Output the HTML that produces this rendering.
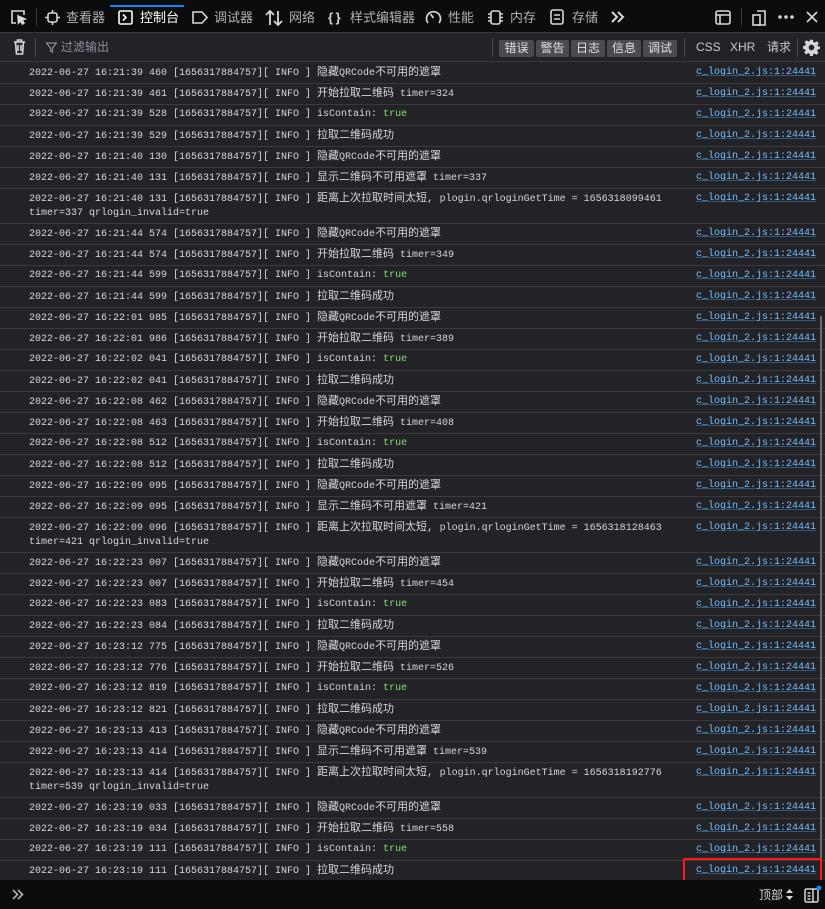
<!DOCTYPE html>
<html><head><meta charset="utf-8"><style>
*{box-sizing:border-box;margin:0;padding:0}
body{width:825px;height:909px;background:#232327;overflow:hidden;font-family:"Liberation Sans","Noto Sans CJK SC",sans-serif;color:#d7d7db;position:relative}
.tb{position:absolute;left:0;top:0;width:825px;height:33px;background:#0c0c0d;border-bottom:1px solid #38383d}
.tb .it{position:absolute;top:0;height:33px;line-height:35px;font-size:13px;color:#b1b1b3}
.tb .act{color:#fff}
.bar{position:absolute;left:110px;top:5px;width:74px;height:2px;background:#0a84ff}
.ic{position:absolute}
.fb{position:absolute;left:0;top:33px;width:825px;height:29px;background:#232327;border-bottom:1px solid #38383d}
.btn{position:absolute;top:7px;height:17px;line-height:17px;font-size:12px;color:#e0e0e2;background:#4a4a4f;text-align:center;border-radius:2px}
.fl{position:absolute;top:0;line-height:29px;font-size:12px;color:#c8c8cc}
.sep{position:absolute;width:1px;background:#4a4a4f}
.log{position:absolute;left:0;top:63px;width:825px}
.r{position:relative;border-bottom:1px solid #3a3a3f;padding:3px 0 3px 29px;font:10px/14px "Liberation Mono","Noto Sans CJK SC",monospace;color:#d7d7db;white-space:pre;height:21px}
.r.d{height:35px}
.r .l{position:absolute;right:9px;top:3px;color:#75bfff;text-decoration:underline;text-decoration-color:#2e5a80}
.c{font-size:11px;line-height:14px}
.t{color:#86de74}
.bb{position:absolute;left:0;top:880px;width:825px;height:29px;background:#0c0c0d}
.box{position:absolute;left:683px;top:858px;width:139px;height:24px;border:2px solid #ff1a1a;border-radius:2px}
.sb{position:absolute;left:820px;top:316px;width:2px;height:564px;background:#6b6b70}
</style></head><body>
<div class="tb">
<div class="bar"></div>
<svg class="ic" style="left:10px;top:9px" width="17" height="16" viewBox="0 0 17 16" fill="none" stroke="#d7d7db" stroke-width="1.6"><path d="M6 14H2V2h12v4"/><path d="M8 7l7 3-3 1 2 3-1.5 1-2-3-2 2z" fill="#d7d7db"/></svg>
<div class="sep" style="left:36px;top:8px;height:18px;background:#38383d"></div>
<svg class="ic" style="left:45px;top:10px" width="15" height="15" viewBox="0 0 15 15" fill="none" stroke="#d7d7db" stroke-width="1.6"><rect x="3" y="3" width="9" height="9" rx="2"/><path d="M7.5 0v3M7.5 12v3M0 7.5h3M12 7.5h3"/></svg>
<div class="it" style="left:66px">查看器</div>
<svg class="ic" style="left:118px;top:10px" width="15" height="15" viewBox="0 0 15 15" fill="none" stroke="#fff" stroke-width="1.6"><rect x="1" y="1" width="13" height="13" rx="1.5"/><path d="M5 4.5l3 3-3 3"/></svg>
<div class="it act" style="left:140px">控制台</div>
<svg class="ic" style="left:192px;top:10px" width="16" height="15" viewBox="0 0 16 15" fill="none" stroke="#d7d7db" stroke-width="1.6"><path d="M1 2h9l5 5.5-5 5.5H1z"/></svg>
<div class="it" style="left:214px">调试器</div>
<svg class="ic" style="left:265px;top:10px" width="18" height="16" viewBox="0 0 18 16" fill="none" stroke="#d7d7db" stroke-width="1.8"><path d="M5 15V1M1 5l4-4 4 4M13 1v14M9 11l4 4 4-4"/></svg>
<div class="it" style="left:289px">网络</div>
<div class="it" style="left:328px;font-weight:bold;color:#d7d7db">{&thinsp;}</div>
<div class="it" style="left:350px">样式编辑器</div>
<svg class="ic" style="left:425px;top:9px" width="17" height="16" viewBox="0 0 17 16" fill="none" stroke="#d7d7db" stroke-width="1.7"><path d="M3 14A7 7 0 1 1 14 14"/><path d="M8.5 9l-3-4"/></svg>
<div class="it" style="left:448px">性能</div>
<svg class="ic" style="left:487px;top:10px" width="17" height="15" viewBox="0 0 17 15" fill="none" stroke="#d7d7db" stroke-width="1.6"><rect x="4" y="1" width="9" height="13" rx="2"/><path d="M1 4h3M1 7.5h3M1 11h3M13 4h3M13 7.5h3M13 11h3"/></svg>
<div class="it" style="left:510px">内存</div>
<svg class="ic" style="left:550px;top:9px" width="14" height="16" viewBox="0 0 14 16" fill="none" stroke="#d7d7db" stroke-width="1.6"><rect x="1" y="1" width="12" height="14" rx="2"/><path d="M4 6h6M4 10h6"/></svg>
<div class="it" style="left:572px">存储</div>
<svg class="ic" style="left:611px;top:11px" width="14" height="12" viewBox="0 0 14 12" fill="none" stroke="#d7d7db" stroke-width="2"><path d="M1 1l5 5-5 5M7 1l5 5-5 5"/></svg>
<svg class="ic" style="left:715px;top:10px" width="16" height="15" viewBox="0 0 16 15" fill="none" stroke="#d7d7db" stroke-width="1.6"><rect x="1" y="1" width="14" height="13" rx="2"/><path d="M1 5h14M5 5v9"/></svg>
<div class="sep" style="left:741px;top:8px;height:18px;background:#38383d"></div>
<svg class="ic" style="left:752px;top:9px" width="15" height="17" viewBox="0 0 15 17" fill="none" stroke="#d7d7db" stroke-width="1.6"><path d="M5 2h8v14H5"/><rect x="1" y="6" width="7" height="10"/></svg>
<svg class="ic" style="left:778px;top:15px" width="16" height="4" viewBox="0 0 16 4" fill="#d7d7db"><circle cx="2" cy="2" r="1.8"/><circle cx="8" cy="2" r="1.8"/><circle cx="14" cy="2" r="1.8"/></svg>
<svg class="ic" style="left:806px;top:11px" width="12" height="12" viewBox="0 0 12 12" stroke="#d7d7db" stroke-width="1.6"><path d="M1 1l10 10M11 1L1 11"/></svg>
</div>
<div class="fb">
<svg class="ic" style="left:13px;top:6px" width="13" height="16" viewBox="0 0 13 16" fill="none" stroke="#d7d7db" stroke-width="1.6"><path d="M1 3h11M4.5 3V1h4v2M2.5 3l1 12h6l1-12M5 6v6M8 6v6"/></svg>
<div class="sep" style="left:35px;top:5px;height:19px"></div>
<svg class="ic" style="left:46px;top:9px" width="11" height="11" viewBox="0 0 11 11" fill="none" stroke="#8f8f9d" stroke-width="1.2"><path d="M0.5 1h10L6.5 6v4l-2-1V6z"/></svg>
<div class="fl" style="left:61px;color:#8f8f9d">过滤输出</div>
<div class="sep" style="left:492px;top:5px;height:19px"></div>
<div class="btn" style="left:499px;width:35px">错误</div>
<div class="btn" style="left:536px;width:33px">警告</div>
<div class="btn" style="left:571px;width:34px">日志</div>
<div class="btn" style="left:607px;width:34px">信息</div>
<div class="btn" style="left:643px;width:34px">调试</div>
<div class="sep" style="left:684px;top:5px;height:19px"></div>
<div class="fl" style="left:696px">CSS</div>
<div class="fl" style="left:730px">XHR</div>
<div class="fl" style="left:767px">请求</div>
<div class="sep" style="left:797px;top:5px;height:19px"></div>
<svg class="ic" style="left:803px;top:6px" width="17" height="17" viewBox="0 0 24 24" fill="#d7d7db"><path d="M10 1h4l.6 3.2 2.2.9 2.7-1.9 2.8 2.8-1.9 2.7.9 2.2L24 10v4l-3.2.6-.9 2.2 1.9 2.7-2.8 2.8-2.7-1.9-2.2.9L14 24h-4l-.6-3.2-2.2-.9-2.7 1.9-2.8-2.8 1.9-2.7-.9-2.2L0 14v-4l3.2-.6.9-2.2L2.2 4.5 5 1.7l2.7 1.9 2.2-.9zM12 8a4 4 0 1 0 0 8 4 4 0 0 0 0-8z"/></svg>
</div>
<div class="log">
<div class="r">2022-06-27 16:21:39 460 [1656317884757][ INFO ] <span class="c">隐藏</span>QRCode<span class="c">不可用的遮罩</span><span class="l">c_login_2.js:1:24441</span></div>
<div class="r">2022-06-27 16:21:39 461 [1656317884757][ INFO ] <span class="c">开始拉取二维码</span> timer=324<span class="l">c_login_2.js:1:24441</span></div>
<div class="r">2022-06-27 16:21:39 528 [1656317884757][ INFO ] isContain: <span class="t">true</span><span class="l">c_login_2.js:1:24441</span></div>
<div class="r">2022-06-27 16:21:39 529 [1656317884757][ INFO ] <span class="c">拉取二维码成功</span><span class="l">c_login_2.js:1:24441</span></div>
<div class="r">2022-06-27 16:21:40 130 [1656317884757][ INFO ] <span class="c">隐藏</span>QRCode<span class="c">不可用的遮罩</span><span class="l">c_login_2.js:1:24441</span></div>
<div class="r">2022-06-27 16:21:40 131 [1656317884757][ INFO ] <span class="c">显示二维码不可用遮罩</span> timer=337<span class="l">c_login_2.js:1:24441</span></div>
<div class="r d">2022-06-27 16:21:40 131 [1656317884757][ INFO ] <span class="c">距离上次拉取时间太短,</span> plogin.qrloginGetTime = 1656318099461
timer=337 qrlogin_invalid=true<span class="l">c_login_2.js:1:24441</span></div>
<div class="r">2022-06-27 16:21:44 574 [1656317884757][ INFO ] <span class="c">隐藏</span>QRCode<span class="c">不可用的遮罩</span><span class="l">c_login_2.js:1:24441</span></div>
<div class="r">2022-06-27 16:21:44 574 [1656317884757][ INFO ] <span class="c">开始拉取二维码</span> timer=349<span class="l">c_login_2.js:1:24441</span></div>
<div class="r">2022-06-27 16:21:44 599 [1656317884757][ INFO ] isContain: <span class="t">true</span><span class="l">c_login_2.js:1:24441</span></div>
<div class="r">2022-06-27 16:21:44 599 [1656317884757][ INFO ] <span class="c">拉取二维码成功</span><span class="l">c_login_2.js:1:24441</span></div>
<div class="r">2022-06-27 16:22:01 985 [1656317884757][ INFO ] <span class="c">隐藏</span>QRCode<span class="c">不可用的遮罩</span><span class="l">c_login_2.js:1:24441</span></div>
<div class="r">2022-06-27 16:22:01 986 [1656317884757][ INFO ] <span class="c">开始拉取二维码</span> timer=389<span class="l">c_login_2.js:1:24441</span></div>
<div class="r">2022-06-27 16:22:02 041 [1656317884757][ INFO ] isContain: <span class="t">true</span><span class="l">c_login_2.js:1:24441</span></div>
<div class="r">2022-06-27 16:22:02 041 [1656317884757][ INFO ] <span class="c">拉取二维码成功</span><span class="l">c_login_2.js:1:24441</span></div>
<div class="r">2022-06-27 16:22:08 462 [1656317884757][ INFO ] <span class="c">隐藏</span>QRCode<span class="c">不可用的遮罩</span><span class="l">c_login_2.js:1:24441</span></div>
<div class="r">2022-06-27 16:22:08 463 [1656317884757][ INFO ] <span class="c">开始拉取二维码</span> timer=408<span class="l">c_login_2.js:1:24441</span></div>
<div class="r">2022-06-27 16:22:08 512 [1656317884757][ INFO ] isContain: <span class="t">true</span><span class="l">c_login_2.js:1:24441</span></div>
<div class="r">2022-06-27 16:22:08 512 [1656317884757][ INFO ] <span class="c">拉取二维码成功</span><span class="l">c_login_2.js:1:24441</span></div>
<div class="r">2022-06-27 16:22:09 095 [1656317884757][ INFO ] <span class="c">隐藏</span>QRCode<span class="c">不可用的遮罩</span><span class="l">c_login_2.js:1:24441</span></div>
<div class="r">2022-06-27 16:22:09 095 [1656317884757][ INFO ] <span class="c">显示二维码不可用遮罩</span> timer=421<span class="l">c_login_2.js:1:24441</span></div>
<div class="r d">2022-06-27 16:22:09 096 [1656317884757][ INFO ] <span class="c">距离上次拉取时间太短,</span> plogin.qrloginGetTime = 1656318128463
timer=421 qrlogin_invalid=true<span class="l">c_login_2.js:1:24441</span></div>
<div class="r">2022-06-27 16:22:23 007 [1656317884757][ INFO ] <span class="c">隐藏</span>QRCode<span class="c">不可用的遮罩</span><span class="l">c_login_2.js:1:24441</span></div>
<div class="r">2022-06-27 16:22:23 007 [1656317884757][ INFO ] <span class="c">开始拉取二维码</span> timer=454<span class="l">c_login_2.js:1:24441</span></div>
<div class="r">2022-06-27 16:22:23 083 [1656317884757][ INFO ] isContain: <span class="t">true</span><span class="l">c_login_2.js:1:24441</span></div>
<div class="r">2022-06-27 16:22:23 084 [1656317884757][ INFO ] <span class="c">拉取二维码成功</span><span class="l">c_login_2.js:1:24441</span></div>
<div class="r">2022-06-27 16:23:12 775 [1656317884757][ INFO ] <span class="c">隐藏</span>QRCode<span class="c">不可用的遮罩</span><span class="l">c_login_2.js:1:24441</span></div>
<div class="r">2022-06-27 16:23:12 776 [1656317884757][ INFO ] <span class="c">开始拉取二维码</span> timer=526<span class="l">c_login_2.js:1:24441</span></div>
<div class="r">2022-06-27 16:23:12 819 [1656317884757][ INFO ] isContain: <span class="t">true</span><span class="l">c_login_2.js:1:24441</span></div>
<div class="r">2022-06-27 16:23:12 821 [1656317884757][ INFO ] <span class="c">拉取二维码成功</span><span class="l">c_login_2.js:1:24441</span></div>
<div class="r">2022-06-27 16:23:13 413 [1656317884757][ INFO ] <span class="c">隐藏</span>QRCode<span class="c">不可用的遮罩</span><span class="l">c_login_2.js:1:24441</span></div>
<div class="r">2022-06-27 16:23:13 414 [1656317884757][ INFO ] <span class="c">显示二维码不可用遮罩</span> timer=539<span class="l">c_login_2.js:1:24441</span></div>
<div class="r d">2022-06-27 16:23:13 414 [1656317884757][ INFO ] <span class="c">距离上次拉取时间太短,</span> plogin.qrloginGetTime = 1656318192776
timer=539 qrlogin_invalid=true<span class="l">c_login_2.js:1:24441</span></div>
<div class="r">2022-06-27 16:23:19 033 [1656317884757][ INFO ] <span class="c">隐藏</span>QRCode<span class="c">不可用的遮罩</span><span class="l">c_login_2.js:1:24441</span></div>
<div class="r">2022-06-27 16:23:19 034 [1656317884757][ INFO ] <span class="c">开始拉取二维码</span> timer=558<span class="l">c_login_2.js:1:24441</span></div>
<div class="r">2022-06-27 16:23:19 111 [1656317884757][ INFO ] isContain: <span class="t">true</span><span class="l">c_login_2.js:1:24441</span></div>
<div class="r">2022-06-27 16:23:19 111 [1656317884757][ INFO ] <span class="c">拉取二维码成功</span><span class="l">c_login_2.js:1:24441</span></div>
</div>
<div class="sb"></div>
<div class="box"></div>
<div class="bb">
<svg class="ic" style="left:12px;top:9px" width="12" height="11" viewBox="0 0 12 11" fill="none" stroke="#b1b1b3" stroke-width="1.6"><path d="M1 1l4.5 4.5L1 10M6 1l4.5 4.5L6 10"/></svg>
<div style="position:absolute;left:759px;top:6px;font-size:12px;color:#d7d7db">顶部</div>
<svg class="ic" style="left:786px;top:9px" width="7" height="11" viewBox="0 0 7 11" fill="#d7d7db"><path d="M3.5 0L7 4H0zM3.5 11L0 7h7z"/></svg>
<svg class="ic" style="left:804px;top:5px" width="18" height="18" viewBox="0 0 18 18" fill="none" stroke="#d7d7db" stroke-width="1.5"><rect x="1" y="4" width="13" height="13" rx="1.5"/><path d="M9 4v13M3.5 8h3M3.5 11h3M3.5 14h3"/><circle cx="15" cy="3" r="2.5" fill="#0a84ff" stroke="none"/></svg>
</div>
</body></html>
